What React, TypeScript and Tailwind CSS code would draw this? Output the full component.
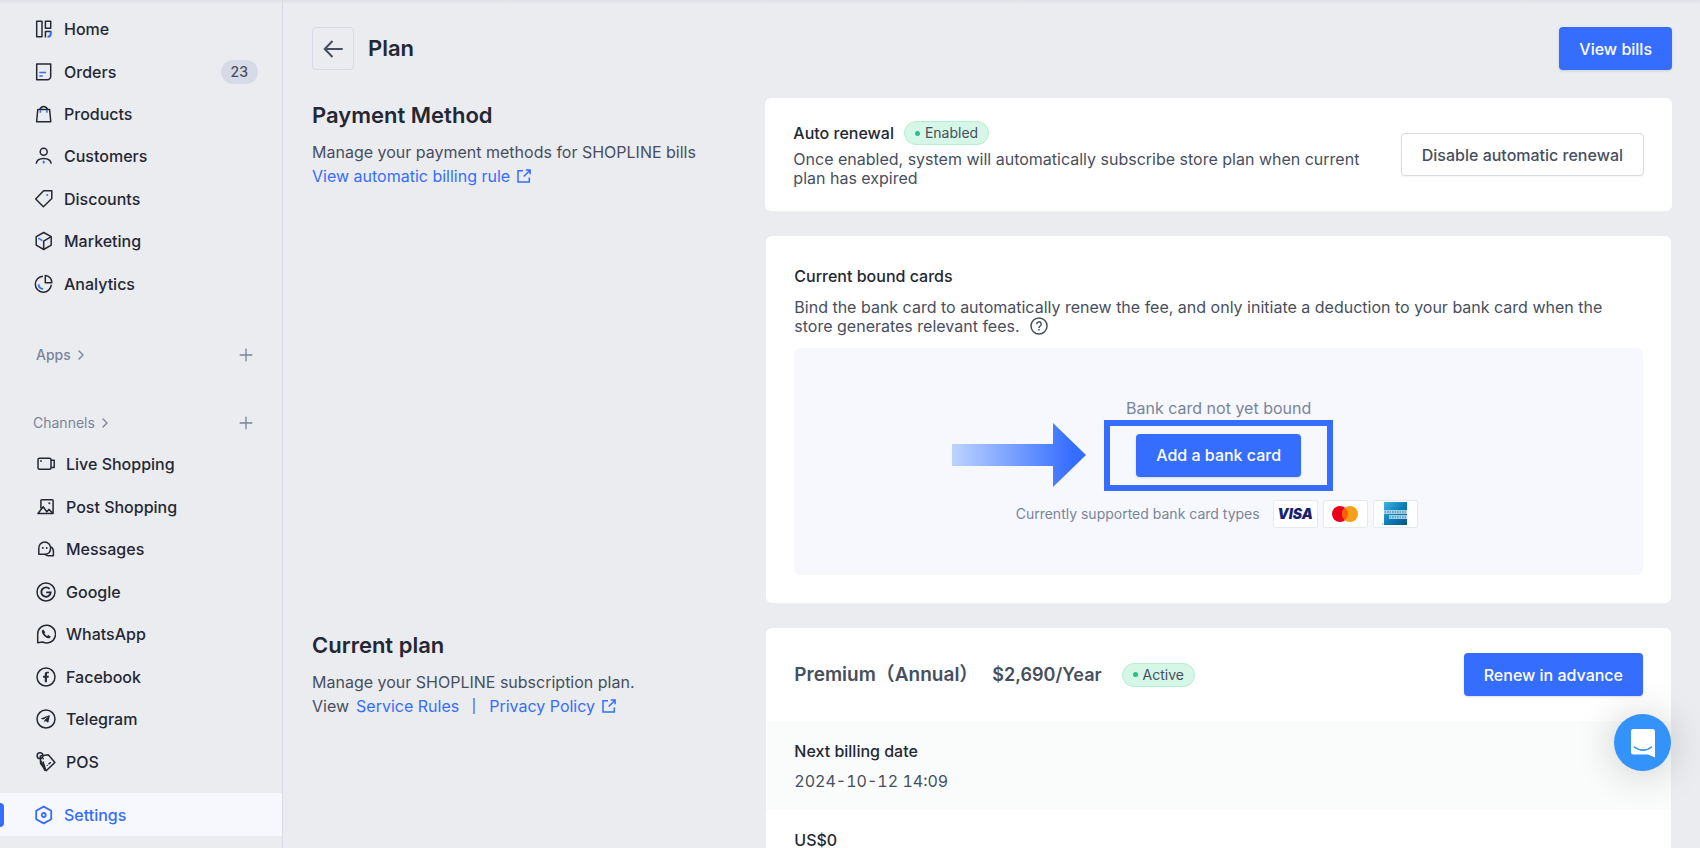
import React from 'react';
import { Plus, ChevronRight } from 'lucide-react';
import { FaFacebookF, FaTelegramPlane } from 'react-icons/fa';

const stroke = {
  fill: 'none',
  stroke: 'currentColor',
  strokeWidth: 1.5,
  strokeLinejoin: 'round' as const,
};

const BLUE = '#356dff';

interface IconProps {
  children: React.ReactNode;
}

const Icon: React.FC<IconProps> = ({ children }) => (
  <svg viewBox="0 0 20 20" className="size-5 shrink-0" aria-hidden="true" {...stroke}>
    {children}
  </svg>
);

const HomeIcon = () => (
  <Icon>
    <rect x="2.7" y="2.2" width="5.3" height="15.6" />
    <rect x="11.4" y="2.2" width="5.3" height="7" />
    <path d="M11.4 18.5v-6h5.9" />
    <path d="M16.8 12.5v1.8c0 2.2-1.4 3.5-3.3 3.5" stroke={BLUE} strokeWidth="2" />
  </Icon>
);

const OrdersIcon = () => (
  <Icon>
    <path d="M2.7 2h14v12.2a3.5 3.5 0 0 1-3.5 3.5H2.7z" />
    <path d="M5.3 10.5H12M5.3 14h3.4" stroke={BLUE} />
  </Icon>
);

const ProductsIcon = () => (
  <Icon>
    <path d="M3.8 5.5h11.8l1.2 12.2H2.6z" />
    <path d="M6 5.5c.5-2 1.9-3.1 3.7-3.1s3.2 1.1 3.7 3.1" />
    <path d="M6.4 6.2v2.6M13 6.2v2.6" stroke={BLUE} />
  </Icon>
);

const CustomersIcon = () => (
  <Icon>
    <circle cx="9.7" cy="5.7" r="3.5" />
    <path d="M2.2 17.8c.3-3.6 3.2-5.4 7.5-5.4s7.2 1.8 7.5 5.4" />
    <path d="m9.7 14.3 1.3 1.8-1.3 1.8-1.3-1.8z" fill={BLUE} stroke="none" />
  </Icon>
);

const DiscountsIcon = () => (
  <Icon>
    <path d="M9.6 1.7h8.2v7.8l-8.4 8.3-7.7-7.9z" />
    <circle cx="13.3" cy="6.1" r="1" fill={BLUE} stroke="none" />
  </Icon>
);

const MarketingIcon = () => (
  <Icon>
    <path d="m9.7 1.5 7.5 4.2v8.5l-7.5 4.3-7.5-4.3V5.7z" />
    <path d="m17.2 5.7-7.5 4.5v8.3" />
    <path d="m4.2 7.2 4.2 2.5" stroke={BLUE} />
  </Icon>
);

const AnalyticsIcon = () => (
  <Icon>
    <path d="M8.9 2.2a8 8 0 1 0 8.4 8.6" />
    <path d="M11.3 1.6v7.2h6.5a6.8 6.8 0 0 0-6.5-7.2z" />
    <path d="M4.6 10.2a4.9 4.9 0 0 0 4.5 4.7" stroke={BLUE} strokeWidth="1.8" />
  </Icon>
);

const LiveIcon = () => (
  <Icon>
    <rect x="2" y="4.3" width="13" height="11" rx="1.5" />
    <path d="M15 6.3h3.2v7.2H15" />
    <circle cx="5" cy="7" r=".9" fill="currentColor" stroke="none" />
  </Icon>
);

const PostIcon = () => (
  <Icon>
    <path d="M4.9 11.5V3.6q0-.8.8-.8h10.6q.8 0 .8.8v12.9H1.9l5.3-6.7 3.6 4.9 2.1-2.3 3.7 3.6" />
    <circle cx="13.3" cy="6.2" r="1" fill="currentColor" stroke="none" />
  </Icon>
);

const MessagesIcon = () => (
  <Icon>
    <path d="M2.8 15.2V8.9a5.9 5.9 0 0 1 11.8 0c0 4-2.4 6.3-6 6.3z" />
    <path d="M14.3 7.6c2 .8 3.1 2.5 3.1 4.5v4.7h-5c-1.5 0-2.6-.5-3.5-1.5" />
    <circle cx="6.8" cy="9" r=".9" fill="currentColor" stroke="none" />
    <circle cx="10.7" cy="9" r=".9" fill="currentColor" stroke="none" />
  </Icon>
);

const GoogleIcon = () => (
  <Icon>
    <circle cx="10" cy="10" r="9" />
    <path d="M13.6 7A4.7 4.7 0 1 0 14.7 10.4H10.2" strokeWidth="1.9" strokeLinejoin="miter" />
  </Icon>
);

const WhatsAppIcon = () => (
  <Icon>
    <path d="M1.7 18.7V10.3A8.9 8.9 0 1 1 6.6 18z" />
    <path
      d="M7.2 5.6 5.8 6.7c-.3 3.4 3.9 7.8 7.7 7.6l1.3-1.6-2.4-1.7-1.3 1c-1.2-.5-2.2-1.6-2.7-2.7l.9-1.1z"
      fill="currentColor"
      stroke="none"
    />
  </Icon>
);

const FacebookIcon = () => (
  <Icon>
    <circle cx="10" cy="10" r="9" />
    <FaFacebookF x="4.5" y="4.5" size={11} stroke="none" />
  </Icon>
);

const TelegramIcon = () => (
  <Icon>
    <circle cx="10" cy="10" r="9" />
    <FaTelegramPlane x="4.4" y="5" size={10} stroke="none" />
  </Icon>
);

const PosIcon = () => (
  <Icon>
    <circle cx="4" cy="3.7" r="2.9" />
    <path d="m4.3 4 8-1.2 6.6 7.6-8.7 8.4-5.6-7.3z" />
    <path d="M4.6 8.5 9 18.8M7 9.5l2.7 8.8M12.5 12.3l2.3-2" />
    <circle cx="7.2" cy="6.7" r=".8" fill="currentColor" stroke="none" />
    <circle cx="11.2" cy="13.4" r=".6" fill="currentColor" stroke="none" />
  </Icon>
);

const SettingsIcon = () => (
  <Icon>
    <path d="m9.7 1.6 7.5 4.2v8.4l-7.5 4.2-7.5-4.2V5.8z" strokeWidth="1.8" />
    <circle cx="9.7" cy="10" r="2" strokeWidth="1.8" />
  </Icon>
);

const ExternalIcon = () => (
  <svg viewBox="0 0 14 14" className="size-3.5 shrink-0" aria-hidden="true" {...stroke}>
    <path d="M6 1.7H1V13h11.3V8.5M8.8 1h4.3v4.3M13 1.2 6.7 7.5" strokeLinejoin="miter" />
  </svg>
);

const mainItems = [
  { label: 'Home', icon: HomeIcon },
  { label: 'Orders', icon: OrdersIcon, count: 23 },
  { label: 'Products', icon: ProductsIcon },
  { label: 'Customers', icon: CustomersIcon },
  { label: 'Discounts', icon: DiscountsIcon },
  { label: 'Marketing', icon: MarketingIcon },
  { label: 'Analytics', icon: AnalyticsIcon },
];

const channelItems = [
  { label: 'Live Shopping', icon: LiveIcon },
  { label: 'Post Shopping', icon: PostIcon },
  { label: 'Messages', icon: MessagesIcon },
  { label: 'Google', icon: GoogleIcon },
  { label: 'WhatsApp', icon: WhatsAppIcon },
  { label: 'Facebook', icon: FacebookIcon },
  { label: 'Telegram', icon: TelegramIcon },
  { label: 'POS', icon: PosIcon },
];

const Sidebar = () => (
  <aside className="flex w-[283px] shrink-0 flex-col border-r border-[#d7dbe7] pt-2 font-medium">
    <nav className="grid h-[297px] auto-rows-fr">
      {mainItems.map(({ label, icon: ItemIcon, count }) => (
        <a key={label} href="#" className="flex items-center gap-2.5 pl-[34px] pr-6">
          <ItemIcon />
          <span>{label}</span>
          {count && (
            <span className="ml-auto flex h-6 items-center rounded-full bg-[#d7dbe7] px-2.5 text-sm text-[#474f5e]">
              {count}
            </span>
          )}
        </a>
      ))}
    </nav>

    <div className="mt-[38px] flex h-6 items-center justify-between pl-9 pr-[26px] text-sm text-[#7a8499]">
      <a href="#" className="flex items-center gap-0.5">
        Apps <ChevronRight size={16} />
      </a>
      <button type="button" aria-label="Add app">
        <Plus size={20} strokeWidth={1.6} />
      </button>
    </div>

    <div className="mt-11 flex h-6 items-center justify-between pl-[33px] pr-[26px] text-sm font-normal text-[#7a8499]">
      <a href="#" className="flex items-center gap-0.5">
        Channels <ChevronRight size={16} />
      </a>
      <button type="button" aria-label="Add channel">
        <Plus size={20} strokeWidth={1.6} />
      </button>
    </div>

    <nav className="mt-2 grid h-[340px] auto-rows-fr">
      {channelItems.map(({ label, icon: ItemIcon }) => (
        <a key={label} href="#" className="flex items-center gap-2.5 pl-9 pr-6">
          <ItemIcon />
          <span>{label}</span>
        </a>
      ))}
    </nav>

    <a
      href="#"
      className="relative mt-2.5 flex h-[43px] items-center gap-2.5 bg-[#f7f8fd] pl-[34px] text-[#356dff]"
    >
      <span className="absolute left-0 h-6 w-1 rounded-r bg-[#356dff]" />
      <SettingsIcon />
      <span>Settings</span>
    </a>
  </aside>
);

const PrimaryButton: React.FC<{ children: React.ReactNode }> = ({ children }) => (
  <button
    type="button"
    className="h-[43px] shrink-0 rounded bg-[#356dff] px-5 font-medium text-white shadow-sm"
  >
    {children}
  </button>
);

const StatusBadge: React.FC<{ label: string }> = ({ label }) => (
  <span className="flex h-6 items-center gap-[5px] rounded-full border border-[#b5eed3] bg-[#d6f7e7] px-2.5 text-sm text-[#474f5e]">
    <span className="size-[5px] rounded-full bg-[#27c08a]" />
    {label}
  </span>
);

const VisaLogo = () => (
  <span className="text-sm leading-none font-black text-[#1a1f71] italic">VISA</span>
);

const MastercardLogo = () => (
  <svg viewBox="0 0 26 16" className="h-4" role="img" aria-label="Mastercard">
    <circle cx="8" cy="8" r="8" fill="#eb001b" />
    <circle cx="18" cy="8" r="8" fill="#f79e1b" />
    <path d="M13 1.8a8 8 0 0 1 0 12.4 8 8 0 0 1 0-12.4z" fill="#ff5f00" />
  </svg>
);

const AmexLogo = () => (
  <svg viewBox="0 0 26 24" className="h-6" role="img" aria-label="American Express">
    <defs>
      <linearGradient id="amex" x1="0" y1="0" x2="1" y2="1">
        <stop offset="0" stopColor="#3fb4e5" />
        <stop offset=".5" stopColor="#0c7fb8" />
        <stop offset="1" stopColor="#04578c" />
      </linearGradient>
    </defs>
    <rect x="2" y="0" width="23" height="23" fill="url(#amex)" />
    <path d="M2 8.3h23v3.4H2zM7 13.3h18v3.4H7z" fill="#cfe6f1" />
    <path d="M2.5 10H25M7.5 15H25" stroke="#3a90bd" strokeWidth="1.6" strokeDasharray="1.7 .8" />
    <circle cx=".8" cy="22" r=".8" fill="#7fb6d3" />
  </svg>
);

const cardLogos = [
  { name: 'visa', logo: VisaLogo },
  { name: 'mastercard', logo: MastercardLogo },
  { name: 'amex', logo: AmexLogo },
];

const App = () => {
  return (
    <div className="relative flex h-screen overflow-hidden bg-[#ebecf0] font-['Inter','Noto_Sans_CJK_SC',sans-serif] text-base text-[#242833]">
      <div className="absolute inset-x-0 top-0 h-1 bg-gradient-to-b from-[#dfe0e5] to-transparent" />
      <Sidebar />

      <main className="min-w-0 flex-1 overflow-y-auto pt-[27px] pr-7 pl-[29px] [scrollbar-width:none]">
        <header className="flex items-center">
          <button
            type="button"
            aria-label="Back"
            className="flex h-[43px] w-[42px] items-center justify-center rounded border border-[#d7dbe7] text-[#474f5e]"
          >
            <svg viewBox="0 0 20 18" className="w-5" fill="none" stroke="currentColor" strokeWidth="2">
              <path d="M9.5 1 1.7 9l7.8 8M1.7 9h18" />
            </svg>
          </button>
          <h1 className="ml-3.5 text-[22px] font-semibold">Plan</h1>
          <div className="ml-auto">
            <PrimaryButton>View bills</PrimaryButton>
          </div>
        </header>

        <div className="mt-7 grid grid-cols-3 gap-y-[25px]">
          {/* Payment method */}
          <section className="text-[#474f5e]">
            <h2 className="mb-2 text-[22px] leading-[34px] font-semibold text-[#242833]">Payment Method</h2>
            <p>Manage your payment methods for SHOPLINE bills</p>
            <a href="#" className="flex items-center gap-[7px] text-[#356dff]">
              View automatic billing rule <ExternalIcon />
            </a>
          </section>

          <div className="col-span-2 flex flex-col gap-[25px]">
            <div className="flex items-center rounded-md bg-white px-7 py-[23px]">
              <div className="flex-1">
                <div className="flex items-center gap-2.5">
                  <h3 className="font-medium">Auto renewal</h3>
                  <StatusBadge label="Enabled" />
                </div>
                <p className="mt-[5px] leading-[19px] text-[#474f5e]">
                  Once enabled, system will automatically subscribe store plan when current plan has expired
                </p>
              </div>
              <button
                type="button"
                className="ml-6 h-[43px] shrink-0 rounded border border-[#d7dbe7] bg-white px-5 font-medium text-[#474f5e] shadow-xs"
              >
                Disable automatic renewal
              </button>
            </div>

            <div className="mx-px rounded-md bg-white p-7">
              <h3 className="font-medium">Current bound cards</h3>
              <p className="mt-2.5 pr-4 leading-[19px] text-[#474f5e]">
                Bind the bank card to automatically renew the fee, and only initiate a deduction to your bank card when
                the store generates relevant fees.
                <button type="button" aria-label="Help" className="ml-2.5 align-top">
                  <svg viewBox="0 0 18 18" className="size-[18px]" {...stroke}>
                    <circle cx="9" cy="9" r="8" />
                    <path d="M6.7 7.2a2.3 2.3 0 1 1 3.4 2c-.8.5-1.1.8-1.1 1.7M9 12v1.4" />
                  </svg>
                </button>
              </p>

              <div className="mt-3 flex h-[227px] flex-col items-center justify-center rounded-md bg-[#f7f8fd] text-[#7a8499]">
                <p>Bank card not yet bound</p>
                <div className="relative mt-3.5">
                  <PrimaryButton>Add a bank card</PrimaryButton>
                  <div className="absolute -inset-x-8 -inset-y-3.5 border-6 border-[#356dff]" />
                  <svg
                    viewBox="0 0 134 64"
                    className="absolute top-1/2 right-full mr-[50px] w-[134px] -translate-y-1/2"
                    aria-hidden="true"
                  >
                    <defs>
                      <linearGradient id="pointer">
                        <stop offset="0" stopColor="#bdd3ff" />
                        <stop offset=".9" stopColor="#356dff" />
                      </linearGradient>
                    </defs>
                    <path d="M0 21h101V0l33 32-33 32V43H0z" fill="url(#pointer)" />
                  </svg>
                </div>
                <div className="mt-[23px] flex items-center gap-[5px] pr-1 text-sm">
                  <span className="mr-2">Currently supported bank card types</span>
                  {cardLogos.map(({ name, logo: Logo }) => (
                    <span
                      key={name}
                      className="flex h-7 w-[45px] items-center justify-center rounded-xs border border-[#e8e9ec] bg-white"
                    >
                      <Logo />
                    </span>
                  ))}
                </div>
              </div>
            </div>
          </div>

          {/* Current plan */}
          <section className="text-[#474f5e]">
            <h2 className="mb-2 text-[22px] leading-[34px] font-semibold text-[#242833]">Current plan</h2>
            <p>Manage your SHOPLINE subscription plan.</p>
            <p className="flex items-center text-[#356dff]">
              <span className="mr-[7px] text-[#474f5e]">View</span>
              <a href="#">Service Rules</a>
              <span className="mx-3.5 h-4 w-0.5 bg-[#6f97ff]" />
              <a href="#" className="flex items-center gap-[7px]">
                Privacy Policy <ExternalIcon />
              </a>
            </p>
          </section>

          <div className="col-span-2 mx-px rounded-md bg-white">
            <div className="flex h-[93px] items-center px-7">
              <h3 className="text-[19px] leading-6 font-semibold text-[#474f5e]">Premium（Annual）</h3>
              <span className="mr-5 ml-3.5 text-lg leading-6 font-semibold text-[#474f5e]">$2,690/Year</span>
              <StatusBadge label="Active" />
              <div className="ml-auto">
                <PrimaryButton>Renew in advance</PrimaryButton>
              </div>
            </div>
            <dl>
              <div className="h-[89px] bg-[#fafcfb] px-7 pt-[18px]">
                <dt className="font-medium">Next billing date</dt>
                <dd className="mt-1.5 text-[#474f5e] tabular-nums">2024-10-12 14:09</dd>
              </div>
              <div className="h-[89px] px-7 pt-[18px]">
                <dt className="font-medium">US$0</dt>
              </div>
            </dl>
          </div>
        </div>
      </main>

      <button
        type="button"
        aria-label="Open chat"
        className="absolute right-[29px] bottom-[77px] flex size-[57px] items-center justify-center rounded-full bg-[#3492fb] shadow-[0_2px_40px_rgba(0,0,0,0.2)]"
      >
        <svg viewBox="0 0 26 30" className="w-[26px]" aria-hidden="true">
          <path d="M3.5 1h19A2.5 2.5 0 0 1 25 3.5v26l-7-3H3.5A2.5 2.5 0 0 1 1 24V3.5A2.5 2.5 0 0 1 3.5 1z" fill="#fff" />
          <path d="M4.5 19c5 4.2 12 4.2 17 0" fill="none" stroke="#3492fb" strokeWidth="1.6" strokeLinecap="round" />
        </svg>
      </button>
    </div>
  );
};

export default App;
